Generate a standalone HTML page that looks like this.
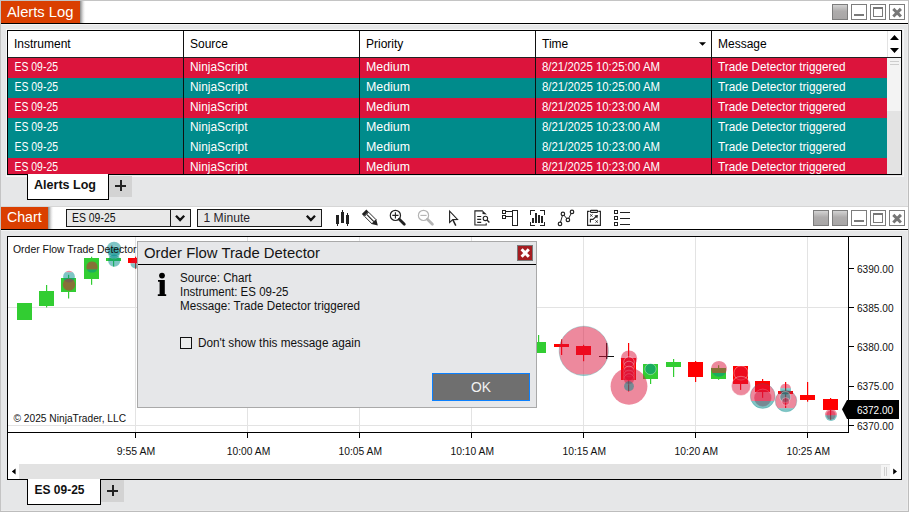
<!DOCTYPE html>
<html><head><meta charset="utf-8"><style>
html,body{margin:0;padding:0;width:909px;height:512px;overflow:hidden;background:#e6e7e8}
svg{display:block;position:absolute;left:0;top:0}
text{font-family:"Liberation Sans",sans-serif}
</style></head><body>
<svg width="909" height="512" viewBox="0 0 909 512">
<defs>
<linearGradient id="shd" x1="0" x2="1" y1="0" y2="0"><stop offset="0" stop-color="#8c8c8c"/><stop offset="0.35" stop-color="#c8c8c8"/><stop offset="1" stop-color="#ffffff" stop-opacity="0"/></linearGradient>
<linearGradient id="gbtn" x1="0" x2="0" y1="0" y2="1"><stop offset="0" stop-color="#d6d6d6"/><stop offset="0.45" stop-color="#aeacac"/><stop offset="1" stop-color="#a8a6a6"/></linearGradient>
<linearGradient id="maxg" x1="0" x2="0" y1="0" y2="1"><stop offset="0" stop-color="#777"/><stop offset="1" stop-color="#bbb"/></linearGradient>
</defs>
<g shape-rendering="crispEdges">
<!-- window frame -->
<rect x="0" y="0" width="909" height="512" fill="#e6e7e8"/>
<rect x="0" y="0" width="909" height="1" fill="#c4c4c4"/>
<rect x="0" y="0" width="1" height="512" fill="#c4c4c4"/>
<rect x="908" y="0" width="1" height="512" fill="#bdbdbd"/>
<rect x="907" y="1" width="1" height="510" fill="#ececec"/>
<rect x="0" y="511" width="909" height="1" fill="#bdbdbd"/>
<rect x="1" y="510" width="907" height="1" fill="#ececec"/>

<!-- ===== Alerts Log title bar ===== -->
<rect x="1" y="1" width="907" height="22" fill="#ffffff"/>
<rect x="80" y="1" width="6" height="22" fill="url(#shd)"/>
<rect x="1" y="1" width="79" height="22" fill="#da3f00"/>
<rect x="1" y="23" width="907" height="1" fill="#000"/>
<rect x="1" y="24" width="907" height="1" fill="#f3f3f3"/>
<rect x="6" y="29" width="897" height="147" fill="none" stroke="#f6f6f6" stroke-width="1" transform="translate(0.5 0.5)"/>
</g>
<text x="7" y="16.6" font-size="15" fill="#fff" textLength="66.5" lengthAdjust="spacingAndGlyphs">Alerts Log</text>

<g id="wbtns" shape-rendering="crispEdges">
<rect x="832.5" y="4.5" width="15" height="15" fill="url(#gbtn)" stroke="#7d7d7d"/>
<rect x="851.5" y="4.5" width="15" height="15" fill="#fff" stroke="#7d7d7d"/>
<rect x="854" y="14" width="10" height="2" fill="#7a7a7a"/>
<rect x="870.5" y="4.5" width="15" height="15" fill="#fff" stroke="#7d7d7d"/>
<rect x="873.5" y="7.5" width="9" height="9" fill="#fff" stroke="#7a7a7a"/>
<rect x="873" y="7" width="10" height="2" fill="#777"/>
<rect x="889.5" y="4.5" width="15" height="15" fill="#fff" stroke="#7d7d7d"/>
</g>
<path d="M893.3 8.9 L900.9 16.5 M900.9 8.9 L893.3 16.5" stroke="#777" stroke-width="3"/>

<!-- ===== Alerts table ===== -->
<g shape-rendering="crispEdges">
<rect x="8" y="31" width="893" height="143" fill="#fff"/>
<rect x="8" y="58" width="879" height="20" fill="#dc143c"/>
<rect x="8" y="78" width="879" height="20" fill="#008b8b"/>
<rect x="8" y="98" width="879" height="20" fill="#dc143c"/>
<rect x="8" y="118" width="879" height="20" fill="#008b8b"/>
<rect x="8" y="138" width="879" height="20" fill="#008b8b"/>
<rect x="8" y="158" width="879" height="16" fill="#dc143c"/>
<!-- scrollbar -->
<rect x="887" y="31" width="1" height="26" fill="#e3e3e3"/>
<rect x="887" y="58" width="14" height="116" fill="#e3e3e3"/>
<rect x="887" y="58" width="14" height="53" fill="#f3f3f3"/>
<rect x="890" y="61" width="9" height="1" fill="#cdcdcd"/>
<rect x="890" y="64" width="9" height="1" fill="#cdcdcd"/>
<!-- borders -->
<rect x="7" y="30" width="895" height="1" fill="#000"/>
<rect x="7" y="30" width="1" height="145" fill="#000"/>
<rect x="901" y="30" width="1" height="145" fill="#000"/>
<rect x="7" y="174" width="895" height="1" fill="#000"/>
<rect x="8" y="57" width="893" height="1" fill="#222"/>
<rect x="183" y="31" width="1" height="143" fill="#111"/>
<rect x="359" y="31" width="1" height="143" fill="#111"/>
<rect x="535" y="31" width="1" height="143" fill="#111"/>
<rect x="711" y="31" width="1" height="143" fill="#111"/>
</g>
<path d="M890 40 L899 40 L894.5 35 Z M890 48 L899 48 L894.5 53 Z" fill="#000"/>
<path d="M699 42.3 L706 42.3 L702.5 45.8 Z" fill="#000"/>
<g font-size="12" fill="#000">
<text x="14" y="48">Instrument</text>
<text x="190" y="48">Source</text>
<text x="366" y="48">Priority</text>
<text x="542" y="48">Time</text>
<text x="718" y="48">Message</text>
</g>
<g font-size="12" fill="#fff" id="rows">
<text x="14.5" y="71" textLength="43.5" lengthAdjust="spacingAndGlyphs">ES 09-25</text>
<text x="190" y="71" textLength="57.5" lengthAdjust="spacingAndGlyphs">NinjaScript</text>
<text x="366" y="71" textLength="44" lengthAdjust="spacingAndGlyphs">Medium</text>
<text x="542" y="71" textLength="118" lengthAdjust="spacingAndGlyphs">8/21/2025 10:25:00 AM</text>
<text x="718" y="71" textLength="127.5" lengthAdjust="spacingAndGlyphs">Trade Detector triggered</text>
<text x="14.5" y="91" textLength="43.5" lengthAdjust="spacingAndGlyphs">ES 09-25</text>
<text x="190" y="91" textLength="57.5" lengthAdjust="spacingAndGlyphs">NinjaScript</text>
<text x="366" y="91" textLength="44" lengthAdjust="spacingAndGlyphs">Medium</text>
<text x="542" y="91" textLength="118" lengthAdjust="spacingAndGlyphs">8/21/2025 10:25:00 AM</text>
<text x="718" y="91" textLength="127.5" lengthAdjust="spacingAndGlyphs">Trade Detector triggered</text>
<text x="14.5" y="111" textLength="43.5" lengthAdjust="spacingAndGlyphs">ES 09-25</text>
<text x="190" y="111" textLength="57.5" lengthAdjust="spacingAndGlyphs">NinjaScript</text>
<text x="366" y="111" textLength="44" lengthAdjust="spacingAndGlyphs">Medium</text>
<text x="542" y="111" textLength="118" lengthAdjust="spacingAndGlyphs">8/21/2025 10:23:00 AM</text>
<text x="718" y="111" textLength="127.5" lengthAdjust="spacingAndGlyphs">Trade Detector triggered</text>
<text x="14.5" y="131" textLength="43.5" lengthAdjust="spacingAndGlyphs">ES 09-25</text>
<text x="190" y="131" textLength="57.5" lengthAdjust="spacingAndGlyphs">NinjaScript</text>
<text x="366" y="131" textLength="44" lengthAdjust="spacingAndGlyphs">Medium</text>
<text x="542" y="131" textLength="118" lengthAdjust="spacingAndGlyphs">8/21/2025 10:23:00 AM</text>
<text x="718" y="131" textLength="127.5" lengthAdjust="spacingAndGlyphs">Trade Detector triggered</text>
<text x="14.5" y="151" textLength="43.5" lengthAdjust="spacingAndGlyphs">ES 09-25</text>
<text x="190" y="151" textLength="57.5" lengthAdjust="spacingAndGlyphs">NinjaScript</text>
<text x="366" y="151" textLength="44" lengthAdjust="spacingAndGlyphs">Medium</text>
<text x="542" y="151" textLength="118" lengthAdjust="spacingAndGlyphs">8/21/2025 10:23:00 AM</text>
<text x="718" y="151" textLength="127.5" lengthAdjust="spacingAndGlyphs">Trade Detector triggered</text>
<text x="14.5" y="171" textLength="43.5" lengthAdjust="spacingAndGlyphs">ES 09-25</text>
<text x="190" y="171" textLength="57.5" lengthAdjust="spacingAndGlyphs">NinjaScript</text>
<text x="366" y="171" textLength="44" lengthAdjust="spacingAndGlyphs">Medium</text>
<text x="542" y="171" textLength="118" lengthAdjust="spacingAndGlyphs">8/21/2025 10:23:00 AM</text>
<text x="718" y="171" textLength="127.5" lengthAdjust="spacingAndGlyphs">Trade Detector triggered</text>
</g>

<!-- tabs alerts -->
<g shape-rendering="crispEdges">
<rect x="27" y="174" width="82" height="26" fill="#000"/>
<rect x="28" y="174" width="80" height="25" fill="#fff"/>
<rect x="109" y="176" width="23" height="21" fill="#d3d3d3"/>
<rect x="115" y="184.5" width="11" height="2" fill="#222"/>
<rect x="119.5" y="180" width="2" height="11" fill="#222"/>
</g>
<text x="34" y="189" font-size="12.5" font-weight="bold" fill="#111" textLength="62" lengthAdjust="spacingAndGlyphs">Alerts Log</text>

<!-- ===== Chart toolbar ===== -->
<g shape-rendering="crispEdges">
<rect x="1" y="206" width="907" height="1" fill="#d6d6d6"/>
<rect x="1" y="207" width="907" height="22" fill="#fff"/>
<rect x="48" y="207" width="6" height="22" fill="url(#shd)"/>
<rect x="1" y="207" width="47" height="22" fill="#da3f00"/>
<rect x="1" y="229" width="907" height="1" fill="#000"/>
<rect x="1" y="230" width="907" height="1" fill="#f3f3f3"/>
</g>
<text x="7" y="222.4" font-size="14" fill="#fff" textLength="34.6" lengthAdjust="spacingAndGlyphs">Chart</text>

<g shape-rendering="crispEdges">
<rect x="66.5" y="209.5" width="124" height="17" fill="#e8e8e8" stroke="#1a1a1a"/>
<rect x="170" y="210" width="1" height="16" fill="#1a1a1a"/>
<rect x="197.5" y="209.5" width="124" height="17" fill="#e8e8e8" stroke="#1a1a1a"/>
</g>
<path d="M176 215.7 L180.1 220 L184.2 215.7 M306.8 215.7 L310.9 220 L315 215.7" fill="none" stroke="#111" stroke-width="2.3"/>
<text x="72" y="222" font-size="12" fill="#111" textLength="43.5" lengthAdjust="spacingAndGlyphs">ES 09-25</text>
<text x="203.5" y="222" font-size="12" fill="#2a1f2a" textLength="46.5" lengthAdjust="spacingAndGlyphs">1 Minute</text>

<!-- toolbar icons -->
<g fill="#222" shape-rendering="crispEdges">
<rect x="336" y="215" width="3" height="9"/><rect x="337" y="224" width="1" height="2"/>
<rect x="341" y="212" width="3" height="11"/><rect x="342" y="210" width="1" height="2"/>
<rect x="346" y="215" width="3" height="9"/><rect x="347" y="213" width="1" height="2"/><rect x="347" y="224" width="1" height="2"/>
</g>
<g transform="translate(370.9 218.6) rotate(-45)">
<rect x="-2.9" y="-6.2" width="5.8" height="10.6" fill="#fff" stroke="#222" stroke-width="0.9"/>
<line x1="0" y1="-5.6" x2="0" y2="4.2" stroke="#222" stroke-width="1.1"/>
<rect x="-3.2" y="-9.6" width="6.4" height="3" fill="#222"/>
<path d="M-3.3 4.2 L3.3 4.2 L0 9.8 Z" fill="#222"/>
</g>
<g fill="none" stroke="#222">
<circle cx="395.4" cy="215.4" r="5.1" stroke-width="1.2"/>
<path d="M392.3 215.4 H398.5 M395.4 212.3 V218.5" stroke-width="1.1"/>
<path d="M399.3 219.3 L404.3 224.3" stroke-width="2.8" stroke-linecap="round"/>
</g>
<g fill="none" stroke="#b4b4b4">
<circle cx="423.5" cy="215.4" r="5.1" stroke-width="1.2"/>
<path d="M420.4 215.4 H426.6" stroke-width="1.1"/>
<path d="M427.4 219.3 L432.4 224.3" stroke-width="2.8" stroke-linecap="round"/>
</g>
<path d="M449.6 211.2 L457.5 219.4 L452.8 219.6 L449.6 222.5 Z" fill="#fff" stroke="#222" stroke-width="1.1" stroke-linejoin="miter"/>
<path d="M452.9 219.8 L455.8 225.6" stroke="#222" stroke-width="1.5"/>
<g fill="none" stroke="#222" stroke-width="1.1">
<path d="M482.8 210.9 H474.9 V225 H486.2 V223.2"/>
<path d="M477.2 216.5 H481.2 M477.2 219.4 H481.2 M477.2 222.4 H481.2"/>
<circle cx="485.4" cy="218.4" r="2.2" fill="#fff"/>
<path d="M487 220 L489.4 222.4" stroke-width="1.4"/>
</g>
<path d="M482.5 210.4 L486.9 214.6 L482.5 214 Z" fill="#222"/>
<g fill="none" stroke="#222" stroke-width="1.1" shape-rendering="crispEdges">
<rect x="502.5" y="210.5" width="3" height="3"/>
<rect x="502.5" y="215.5" width="3" height="3"/>
<path d="M505.5 211.5 H512.5 M505.5 216.5 H512.5"/>
<rect x="512.5" y="210.5" width="5" height="15"/>
</g>
<g fill="none" stroke="#222" stroke-width="1.1" shape-rendering="crispEdges">
<path d="M530.5 214.5 V210.5 H535 M540 210.5 H544.5 V214.5 M544.5 221.5 V225.5 H540 M535 225.5 H530.5 V221.5"/>
</g>
<g fill="#222" shape-rendering="crispEdges">
<rect x="532" y="218" width="2" height="5"/>
<rect x="535" y="213" width="2" height="10"/>
<rect x="538" y="215" width="2" height="8"/>
<rect x="541" y="216" width="2" height="7"/>
</g>
<g fill="#fff" stroke="#222" stroke-width="1.2">
<path d="M560 223.9 L562.9 213.9 L567.9 219.9 L572 211.9" fill="none" stroke-width="1"/>
<circle cx="560" cy="223.9" r="1.75"/><circle cx="562.9" cy="213.9" r="1.75"/><circle cx="567.9" cy="219.9" r="1.75"/><circle cx="572" cy="211.9" r="1.75"/>
</g>
<g fill="none" stroke="#222" stroke-width="1.1">
<path d="M589.6 211.4 H587.6 V225.4 H600.4 V211.4 H598.4"/>
<rect x="590.4" y="210.4" width="7.3" height="2" rx="0.8"/>
<path d="M590.1 214.3 L592.6 216.6 M592.6 214.3 L590.1 216.6 M595.4 220.4 L597.9 222.7 M597.9 220.4 L595.4 222.7" stroke-width="0.85"/>
<path d="M590.4 222.6 V219.4 H593 L596.6 216"/>
</g>
<path d="M598 214.9 L597.3 218.4 L594.4 215.6 Z" fill="#222"/>
<g fill="none" stroke="#222" stroke-width="1.1" shape-rendering="crispEdges">
<rect x="614.5" y="210.5" width="3" height="3"/>
<rect x="614.5" y="216.5" width="3" height="3"/>
<rect x="614.5" y="222.5" width="3" height="3"/>
<path d="M620 212.5 H630 M620 218.5 H630 M620 224.5 H630"/>
</g>

<g shape-rendering="crispEdges">
<rect x="813.5" y="210.5" width="15" height="15" fill="url(#gbtn)" stroke="#7d7d7d"/>
<rect x="832.5" y="210.5" width="15" height="15" fill="url(#gbtn)" stroke="#7d7d7d"/>
<rect x="851.5" y="210.5" width="15" height="15" fill="#fff" stroke="#7d7d7d"/>
<rect x="854" y="220" width="10" height="2" fill="#7a7a7a"/>
<rect x="870.5" y="210.5" width="15" height="15" fill="#fff" stroke="#7d7d7d"/>
<rect x="873.5" y="213.5" width="9" height="9" fill="#fff" stroke="#7a7a7a"/>
<rect x="873" y="213" width="10" height="2" fill="#777"/>
<rect x="889.5" y="210.5" width="15" height="15" fill="#fff" stroke="#7d7d7d"/>
</g>
<path d="M893.3 214.9 L900.9 222.5 M900.9 214.9 L893.3 222.5" stroke="#777" stroke-width="3"/>

<!-- ===== Chart panel ===== -->
<g shape-rendering="crispEdges">
<rect x="7" y="236" width="895" height="244" fill="#000"/>
<rect x="8" y="237" width="893" height="242" fill="#fff"/>
<g fill="#e3e3e3">
<rect x="135" y="237" width="1" height="195"/><rect x="247" y="237" width="1" height="195"/><rect x="359" y="237" width="1" height="195"/>
<rect x="471" y="237" width="1" height="195"/><rect x="583" y="237" width="1" height="195"/><rect x="695" y="237" width="1" height="195"/><rect x="807" y="237" width="1" height="195"/>
<rect x="8" y="307" width="840" height="1"/><rect x="8" y="425" width="840" height="1"/>
</g>
<rect x="848" y="237" width="1" height="196" fill="#000"/>
<rect x="8" y="432" width="841" height="1" fill="#000"/>
<g fill="#000">
<rect x="849" y="268" width="5" height="1"/><rect x="849" y="307" width="5" height="1"/><rect x="849" y="346" width="5" height="1"/><rect x="849" y="386" width="5" height="1"/><rect x="849" y="425" width="5" height="1"/>
<rect x="135" y="433" width="1" height="5"/><rect x="247" y="433" width="1" height="5"/><rect x="359" y="433" width="1" height="5"/><rect x="471" y="433" width="1" height="5"/><rect x="583" y="433" width="1" height="5"/><rect x="695" y="433" width="1" height="5"/><rect x="807" y="433" width="1" height="5"/>
</g>
<!-- scrollbar -->
<rect x="8" y="464" width="893" height="15" fill="#e2e2e2"/>
<rect x="8" y="464" width="11" height="15" fill="#fff"/>
<rect x="890" y="464" width="11" height="15" fill="#fff"/>
<rect x="881" y="465" width="9" height="13" fill="#f4f4f4" stroke="#d8d8d8" stroke-width="0"/>
<rect x="884" y="467" width="1" height="9" fill="#cfcfcf"/><rect x="886" y="467" width="1" height="9" fill="#cfcfcf"/>
</g>
<path d="M11.8 471.5 L15.6 468.6 V474.4 Z M897 471.5 L893.2 468.6 V474.4 Z" fill="#000"/>

<g font-size="11" fill="#111">
<text x="857" y="272.7" textLength="36.5" lengthAdjust="spacingAndGlyphs">6390.00</text>
<text x="857" y="311.9" textLength="36.5" lengthAdjust="spacingAndGlyphs">6385.00</text>
<text x="857" y="351" textLength="36.5" lengthAdjust="spacingAndGlyphs">6380.00</text>
<text x="857" y="390.3" textLength="36.5" lengthAdjust="spacingAndGlyphs">6375.00</text>
<text x="857" y="429.6" textLength="36.5" lengthAdjust="spacingAndGlyphs">6370.00</text>
</g>
<g font-size="10.8" fill="#111" text-anchor="middle">
<text x="136" y="454.7" textLength="38.5" lengthAdjust="spacingAndGlyphs">9:55 AM</text>
<text x="248.5" y="454.7" textLength="43.5" lengthAdjust="spacingAndGlyphs">10:00 AM</text>
<text x="360.3" y="454.7" textLength="43.5" lengthAdjust="spacingAndGlyphs">10:05 AM</text>
<text x="472.3" y="454.7" textLength="43.5" lengthAdjust="spacingAndGlyphs">10:10 AM</text>
<text x="584.3" y="454.7" textLength="43.5" lengthAdjust="spacingAndGlyphs">10:15 AM</text>
<text x="696.3" y="454.7" textLength="43.5" lengthAdjust="spacingAndGlyphs">10:20 AM</text>
<text x="808.3" y="454.7" textLength="43.5" lengthAdjust="spacingAndGlyphs">10:25 AM</text>
</g>
<text x="13.5" y="422" font-size="11" fill="#111" textLength="112.5" lengthAdjust="spacingAndGlyphs">© 2025 NinjaTrader, LLC</text>

<!--CANDLES-->
<g id="candles">
<rect x="24" y="303" width="1.2" height="16.0" fill="#32cd32"/>
<rect x="17" y="303" width="15" height="17" fill="#32cd32" shape-rendering="crispEdges"/>
<rect x="46" y="285" width="1.2" height="22.5" fill="#32cd32"/>
<rect x="39" y="291" width="15" height="15" fill="#32cd32" shape-rendering="crispEdges"/>
<rect x="68" y="274.8" width="1.2" height="23.7" fill="#32cd32"/>
<rect x="61" y="278" width="15" height="14" fill="#32cd32" shape-rendering="crispEdges"/>
<rect x="91" y="256.7" width="1.2" height="28.1" fill="#32cd32"/>
<rect x="84" y="258" width="15" height="21" fill="#32cd32" shape-rendering="crispEdges"/>
<rect x="113" y="258" width="1.2" height="8.5" fill="#32cd32"/>
<rect x="106" y="258" width="15" height="3" fill="#32cd32" shape-rendering="crispEdges"/>
<rect x="135" y="256.7" width="1.2" height="12.0" fill="#ff0000"/>
<rect x="128" y="258" width="15" height="5" fill="#ff0000" shape-rendering="crispEdges"/>
<rect x="538" y="335" width="1.2" height="18.0" fill="#32cd32"/>
<rect x="531" y="342" width="15" height="11" fill="#32cd32" shape-rendering="crispEdges"/>
<rect x="561" y="339.3" width="1.2" height="15.7" fill="#ff0000"/>
<rect x="554" y="344" width="15" height="3" fill="#ff0000" shape-rendering="crispEdges"/>
<rect x="583" y="344.8" width="1.2" height="16.4" fill="#ff0000"/>
<rect x="576" y="346" width="15" height="9" fill="#ff0000" shape-rendering="crispEdges"/>
<rect x="606" y="343" width="1.2" height="16.0" fill="#111111"/>
<rect x="599" y="356" width="15" height="1" fill="#111111" shape-rendering="crispEdges"/>
<rect x="628" y="343" width="1.2" height="48.5" fill="#ff0000"/>
<rect x="621" y="358" width="15" height="22" fill="#ff0000" shape-rendering="crispEdges"/>
<rect x="650" y="364" width="1.2" height="20.0" fill="#32cd32"/>
<rect x="643" y="364" width="15" height="15" fill="#32cd32" shape-rendering="crispEdges"/>
<rect x="673" y="359" width="1.2" height="18.0" fill="#32cd32"/>
<rect x="666" y="362" width="15" height="5" fill="#32cd32" shape-rendering="crispEdges"/>
<rect x="695" y="361" width="1.2" height="21.0" fill="#ff0000"/>
<rect x="688" y="362" width="15" height="15" fill="#ff0000" shape-rendering="crispEdges"/>
<rect x="718" y="365.2" width="1.2" height="14.6" fill="#32cd32"/>
<rect x="711" y="368" width="15" height="11" fill="#32cd32" shape-rendering="crispEdges"/>
<rect x="740" y="366" width="1.2" height="23.9" fill="#ff0000"/>
<rect x="733" y="366" width="15" height="18" fill="#ff0000" shape-rendering="crispEdges"/>
<rect x="762" y="379" width="1.2" height="18.8" fill="#ff0000"/>
<rect x="755" y="381" width="15" height="11" fill="#ff0000" shape-rendering="crispEdges"/>
<rect x="785" y="382" width="1.2" height="26.0" fill="#ff0000"/>
<rect x="778" y="391" width="15" height="3" fill="#ff0000" shape-rendering="crispEdges"/>
<rect x="807" y="382" width="1.2" height="19.7" fill="#ff0000"/>
<rect x="800" y="395" width="15" height="5" fill="#ff0000" shape-rendering="crispEdges"/>
<rect x="830" y="398" width="1.2" height="21.7" fill="#ff0000"/>
<rect x="823" y="399" width="15" height="11" fill="#ff0000" shape-rendering="crispEdges"/>
</g>
<g id="bubbles">
<path d="M65.07 272.2 A5.9 5.9 0 0 1 72.93 272.2 Z" fill="#dc143c" fill-opacity="0.5"/><path d="M65.07 272.2 A5.9 5.9 0 1 0 72.93 272.2 Z" fill="#008b8b" fill-opacity="0.5"/>
<circle cx="69" cy="284.6" r="6.2" fill="#dc143c" fill-opacity="0.5"/>
<path d="M86.94 269.4 A5.6 5.6 0 1 1 97.06 269.4 Z" fill="#dc143c" fill-opacity="0.5"/><path d="M86.94 269.4 A5.6 5.6 0 0 0 97.06 269.4 Z" fill="#008b8b" fill-opacity="0.5"/>
<circle cx="114" cy="249" r="7.3" fill="#008b8b" fill-opacity="0.5"/>
<circle cx="114" cy="252.5" r="6.3" fill="#008b8b" fill-opacity="0.5" stroke="#ffffff" stroke-opacity="0.45" stroke-width="0.8"/>
<circle cx="114.2" cy="260.6" r="6.1" fill="#008b8b" fill-opacity="0.5"/>
<path d="M130.50 263.5 A5 5 0 1 1 140.50 263.5 Z" fill="#dc143c" fill-opacity="0.5"/><path d="M130.50 263.5 A5 5 0 0 0 140.50 263.5 Z" fill="#008b8b" fill-opacity="0.5"/>
<path d="M576.84 374.6 A24.7 24.7 0 1 1 590.76 374.6 Z" fill="#dc143c" fill-opacity="0.5"/><path d="M576.84 374.6 A24.7 24.7 0 0 0 590.76 374.6 Z" fill="#008b8b" fill-opacity="0.5"/>
<circle cx="583.8" cy="350.9" r="24.7" fill="none" fill-opacity="0.5" stroke="#008b8b" stroke-opacity="0.3" stroke-width="0.8"/>
<circle cx="629" cy="358.6" r="8.2" fill="#dc143c" fill-opacity="0.5"/>
<circle cx="629" cy="362" r="5.3" fill="#dc143c" fill-opacity="0.5" stroke="#ffffff" stroke-opacity="0.45" stroke-width="0.8"/>
<circle cx="629" cy="366.5" r="5.3" fill="#dc143c" fill-opacity="0.5" stroke="#ffffff" stroke-opacity="0.45" stroke-width="0.8"/>
<circle cx="629" cy="371.5" r="5.3" fill="#dc143c" fill-opacity="0.5" stroke="#ffffff" stroke-opacity="0.45" stroke-width="0.8"/>
<circle cx="629" cy="375.5" r="5.3" fill="#dc143c" fill-opacity="0.5" stroke="#ffffff" stroke-opacity="0.45" stroke-width="0.8"/>
<circle cx="629" cy="379" r="5.3" fill="#dc143c" fill-opacity="0.5" stroke="#ffffff" stroke-opacity="0.45" stroke-width="0.8"/>
<circle cx="629" cy="386.3" r="18.4" fill="#dc143c" fill-opacity="0.5"/>
<circle cx="629" cy="386.2" r="4.9" fill="#008b8b" fill-opacity="0.5"/>
<circle cx="650.5" cy="369" r="5.6" fill="#008b8b" fill-opacity="0.5" stroke="#ffffff" stroke-opacity="0.45" stroke-width="0.8"/>
<path d="M712.31 373 A7.9 7.9 0 1 1 725.69 373 Z" fill="#dc143c" fill-opacity="0.5"/><path d="M712.31 373 A7.9 7.9 0 0 0 725.69 373 Z" fill="#008b8b" fill-opacity="0.5"/>
<circle cx="741" cy="373" r="7.1" fill="#dc143c" fill-opacity="0.5" stroke="#ffffff" stroke-opacity="0.45" stroke-width="0.8"/>
<circle cx="741" cy="385.9" r="9.6" fill="#dc143c" fill-opacity="0.5" stroke="#ffffff" stroke-opacity="0.45" stroke-width="0.8"/>
<circle cx="762.8" cy="397.9" r="8.8" fill="#dc143c" fill-opacity="0.5" stroke="#ffffff" stroke-opacity="0.45" stroke-width="0.8"/>
<path d="M751.35 401 A12.4 12.4 0 1 1 774.05 401 Z" fill="#dc143c" fill-opacity="0.5"/><path d="M751.35 401 A12.4 12.4 0 0 0 774.05 401 Z" fill="#008b8b" fill-opacity="0.5"/>
<circle cx="762.7" cy="396" r="12.4" fill="none" fill-opacity="0.5" stroke="#008b8b" stroke-opacity="0.3" stroke-width="0.8"/>
<path d="M777.95 408.2 A10.8 10.8 0 1 1 794.05 408.2 Z" fill="#dc143c" fill-opacity="0.5"/><path d="M777.95 408.2 A10.8 10.8 0 0 0 794.05 408.2 Z" fill="#008b8b" fill-opacity="0.5"/>
<path d="M780.21 388.2 A5.5 5.5 0 0 1 790.99 388.2 Z" fill="#dc143c" fill-opacity="0.5"/><path d="M780.21 388.2 A5.5 5.5 0 1 0 790.99 388.2 Z" fill="#008b8b" fill-opacity="0.5"/>
<circle cx="785.3" cy="397" r="5.4" fill="#008b8b" fill-opacity="0.5" stroke="#ffffff" stroke-opacity="0.45" stroke-width="0.8"/>
<circle cx="785.7" cy="401.5" r="3.9" fill="#dc143c" fill-opacity="0.5" stroke="#ffffff" stroke-opacity="0.45" stroke-width="0.8"/>
<circle cx="786" cy="401" r="10.8" fill="none" fill-opacity="0.5" stroke="#008b8b" stroke-opacity="0.3" stroke-width="0.8"/>
<circle cx="831" cy="415" r="4.6" fill="#dc143c" fill-opacity="0.5"/>
<path d="M825.01 415.3 A6 6 0 1 1 836.99 415.3 Z" fill="#dc143c" fill-opacity="0.5"/><path d="M825.01 415.3 A6 6 0 0 0 836.99 415.3 Z" fill="#008b8b" fill-opacity="0.5"/>
</g>
<!--/CANDLES-->
<text x="13" y="253" font-size="11.5" fill="#111" textLength="123.5" lengthAdjust="spacingAndGlyphs">Order Flow Trade Detector</text>


<path d="M842 409.2 L847 400 H899 V419 H847 Z" fill="#000"/>
<text x="857" y="413.8" font-size="11" fill="#fff" textLength="36" lengthAdjust="spacingAndGlyphs">6372.00</text>

<!-- bottom tabs -->
<g shape-rendering="crispEdges">
<rect x="27" y="479" width="74" height="26" fill="#000"/>
<rect x="28" y="479" width="72" height="25" fill="#fff"/>
<rect x="101" y="480" width="23" height="22" fill="#d3d3d3"/>
<rect x="107" y="489.5" width="11" height="2" fill="#222"/>
<rect x="111.5" y="485" width="2" height="11" fill="#222"/>
</g>
<text x="34.5" y="493.6" font-size="12.3" font-weight="bold" fill="#111" textLength="50" lengthAdjust="spacingAndGlyphs">ES 09-25</text>

<!-- ===== Dialog ===== -->
<g shape-rendering="crispEdges">
<rect x="137" y="241" width="400" height="167" fill="#a9a9a9"/>
<rect x="138" y="242" width="398" height="165" fill="#e6e7e9"/>
<rect x="138" y="264" width="398" height="1" fill="#000"/>
<rect x="517.5" y="245.5" width="15" height="15" fill="#a51d21" stroke="#7a7a7a"/>
<rect x="180.6" y="337.6" width="10.8" height="10.8" fill="#eceded" stroke="#111" stroke-width="1.3"/>
<rect x="432" y="373" width="98" height="28" fill="#0a80ff"/>
<rect x="433" y="374" width="96" height="26" fill="#6f6f6f"/>
</g>
<path d="M521.6 249.3 L528.8 256.7 M528.8 249.3 L521.6 256.7" stroke="#fff" stroke-width="3"/>
<text x="144" y="257.7" font-size="15" fill="#141414" textLength="176" lengthAdjust="spacingAndGlyphs">Order Flow Trade Detector</text>
<g fill="#000">
<circle cx="162" cy="275.6" r="2.9"/>
<path d="M158 280 H164.8 V294.2 H166.2 V296 H157.8 V294.2 H159.6 V281.8 H158 Z"/>
</g>
<g font-size="12" fill="#111">
<text x="180" y="282" textLength="71.5" lengthAdjust="spacingAndGlyphs">Source: Chart</text>
<text x="180" y="295.8" textLength="108.5" lengthAdjust="spacingAndGlyphs">Instrument: ES 09-25</text>
<text x="180" y="309.6" textLength="180" lengthAdjust="spacingAndGlyphs">Message: Trade Detector triggered</text>
<text x="198" y="346.8" textLength="162.5" lengthAdjust="spacingAndGlyphs">Don't show this message again</text>
</g>
<text x="481" y="391.7" font-size="14" fill="#f2f2f2" text-anchor="middle" textLength="20" lengthAdjust="spacingAndGlyphs">OK</text>


</svg>
</body></html>
